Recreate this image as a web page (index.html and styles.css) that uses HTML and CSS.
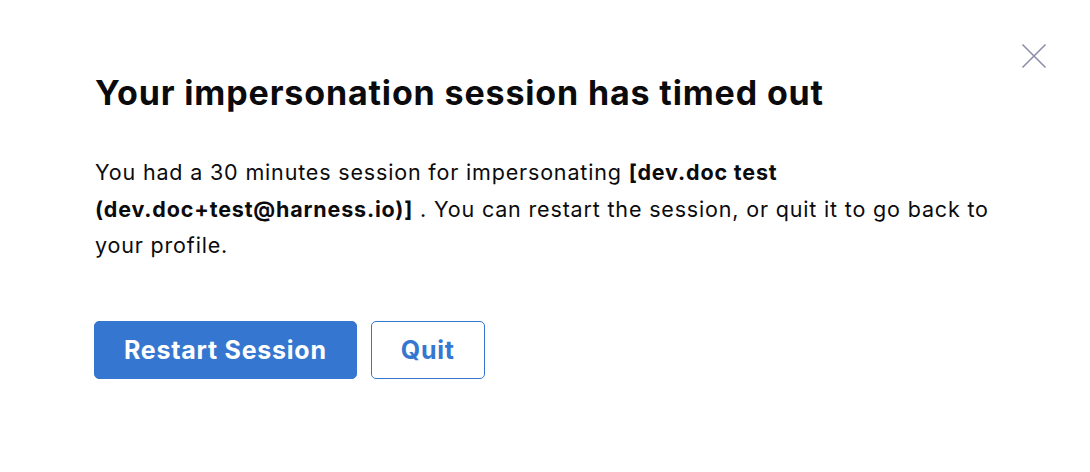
FILE: index.html
```html
<!DOCTYPE html>
<html lang="en">
<head>
<meta charset="utf-8">
<title>Session timed out</title>
<link rel="stylesheet" href="styles.css">
</head>
<body>
<div class="dialog">
  <button class="close" aria-label="Close">
    <svg width="26" height="26" viewBox="0 0 26 26"><path d="M1.5 1.5 L24.5 24.5 M24.5 1.5 L1.5 24.5" stroke="#8d8ea8" stroke-width="1.6" fill="none"/></svg>
  </button>
  <h1 class="title">Your impersonation session has timed out</h1>
  <p class="message">You had a 30 minutes session for impersonating <strong>[dev.doc test (dev.doc+test@harness.io)]</strong> . You can restart the session, or quit it to go back to your profile.</p>
  <div class="actions">
    <button class="btn btn-primary">Restart Session</button>
    <button class="btn btn-secondary">Quit</button>
  </div>
</div>
</body>
</html>
```
FILE: styles.css
```css
* { box-sizing: border-box; }
html, body { margin: 0; background: #fff; }
body {
  font-family: Inter, "Noto Sans", sans-serif;
  color: #0b0b0d;
  width: 1090px;
  height: 472px;
}
.dialog {
  position: relative;
  padding: 71px 80px 0 95px;
}
.close {
  position: absolute;
  top: 43px;
  right: 43px;
  width: 26px;
  height: 26px;
  padding: 0;
  border: 0;
  background: none;
  cursor: pointer;
}
.close svg { display: block; }
.title {
  margin: 0;
  font-size: 34px;
  line-height: 44px;
  font-weight: 700;
  letter-spacing: 0.85px;
}
.message {
  margin: 39px 0 0;
  font-size: 21.5px;
  line-height: 36.5px;
  letter-spacing: 0.83px;
  max-width: 905px;
}
.message strong { font-weight: 700; }
.actions {
  display: flex;
  gap: 14px;
  margin-top: 57px;
  margin-left: -1px;
}
.btn {
  height: 58px;
  border-radius: 5px;
  font-family: Inter, "Noto Sans", sans-serif;
  font-size: 25px;
  font-weight: 700;
  letter-spacing: 0.75px;
  padding: 0 29px;
  cursor: pointer;
}
.btn-primary {
  background: #3577d0;
  color: #fff;
  border: 1px solid #3577d0;
}
.btn-secondary {
  background: #fff;
  color: #3577d0;
  border: 1px solid #3577d0;
}
```
